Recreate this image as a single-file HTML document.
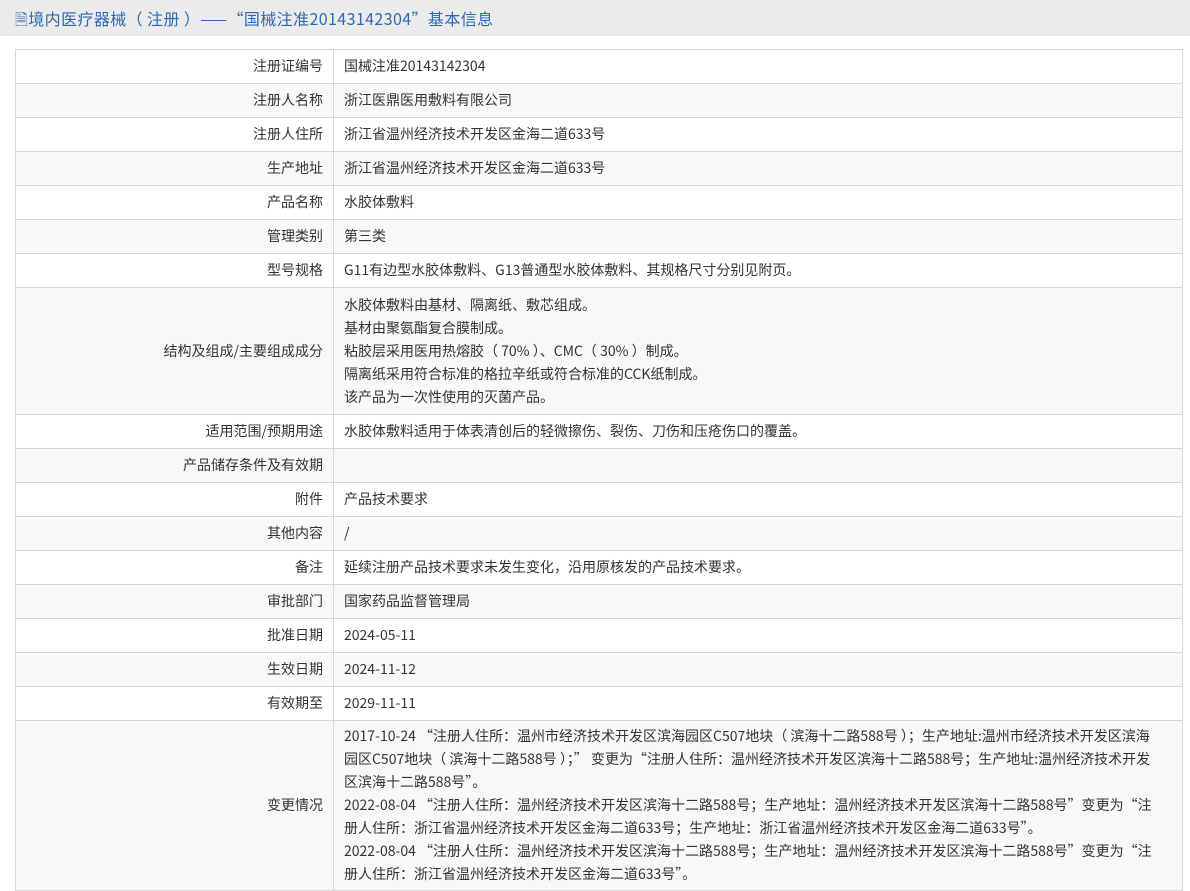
<!DOCTYPE html>
<html><head><meta charset="utf-8"><style>
body{margin:0;background:#fff;font-family:"Noto Sans CJK SC","Liberation Sans",sans-serif;font-size:14px;color:#333;width:1190px;height:855px;overflow:hidden}
.hd{height:36px;background:#ebebeb;color:#2b69b2;font-size:16px;line-height:36px;padding-left:15px;letter-spacing:0.4px}
table{position:absolute;left:15px;top:49px;width:1168px;border-collapse:collapse}
td{border:1px solid #d6d6d6;height:34px;padding:0 10px;box-sizing:border-box;line-height:23px}
td.l{width:318px;text-align:right}
tr:nth-child(even) td{background:#f8f8f8}
.m td{padding:4px 10px}
.m td.w{padding-right:22px}
</style></head><body>
<div class="hd">🗎境内医疗器械（ 注册 ）——“国械注准20143142304”基本信息</div>
<table>
<tr><td class="l">注册证编号</td><td>国械注准20143142304</td></tr>
<tr><td class="l">注册人名称</td><td>浙江医鼎医用敷料有限公司</td></tr>
<tr><td class="l">注册人住所</td><td>浙江省温州经济技术开发区金海二道633号</td></tr>
<tr><td class="l">生产地址</td><td>浙江省温州经济技术开发区金海二道633号</td></tr>
<tr><td class="l">产品名称</td><td>水胶体敷料</td></tr>
<tr><td class="l">管理类别</td><td>第三类</td></tr>
<tr><td class="l">型号规格</td><td>G11有边型水胶体敷料、G13普通型水胶体敷料、其规格尺寸分别见附页。</td></tr>
<tr class="m"><td class="l" style="height:127px">结构及组成/主要组成成分</td><td>水胶体敷料由基材、隔离纸、敷芯组成。<br>基材由聚氨酯复合膜制成。<br>粘胶层采用医用热熔胶（ 70% ）、CMC（ 30% ）制成。<br>隔离纸采用符合标准的格拉辛纸或符合标准的CCK纸制成。<br>该产品为一次性使用的灭菌产品。</td></tr>
<tr><td class="l">适用范围/预期用途</td><td>水胶体敷料适用于体表清创后的轻微擦伤、裂伤、刀伤和压疮伤口的覆盖。</td></tr>
<tr><td class="l">产品储存条件及有效期</td><td></td></tr>
<tr><td class="l">附件</td><td>产品技术要求</td></tr>
<tr><td class="l">其他内容</td><td>/</td></tr>
<tr><td class="l">备注</td><td>延续注册产品技术要求未发生变化，沿用原核发的产品技术要求。</td></tr>
<tr><td class="l">审批部门</td><td>国家药品监督管理局</td></tr>
<tr><td class="l">批准日期</td><td>2024-05-11</td></tr>
<tr><td class="l">生效日期</td><td>2024-11-12</td></tr>
<tr><td class="l">有效期至</td><td>2029-11-11</td></tr>
<tr class="m"><td class="l">变更情况</td><td class="w">2017-10-24 “注册人住所：温州市经济技术开发区滨海园区C507地块（ 滨海十二路588号 ）；生产地址:温州市经济技术开发区滨海园区C507地块（ 滨海十二路588号 ）；” 变更为“注册人住所：温州经济技术开发区滨海十二路588号；生产地址:温州经济技术开发区滨海十二路588号”。<br>2022-08-04 “注册人住所：温州经济技术开发区滨海十二路588号；生产地址：温州经济技术开发区滨海十二路588号”变更为“注册人住所：浙江省温州经济技术开发区金海二道633号；生产地址：浙江省温州经济技术开发区金海二道633号”。<br>2022-08-04 “注册人住所：温州经济技术开发区滨海十二路588号；生产地址：温州经济技术开发区滨海十二路588号”变更为“注册人住所：浙江省温州经济技术开发区金海二道633号”。</td></tr>
</table>
</body></html>
